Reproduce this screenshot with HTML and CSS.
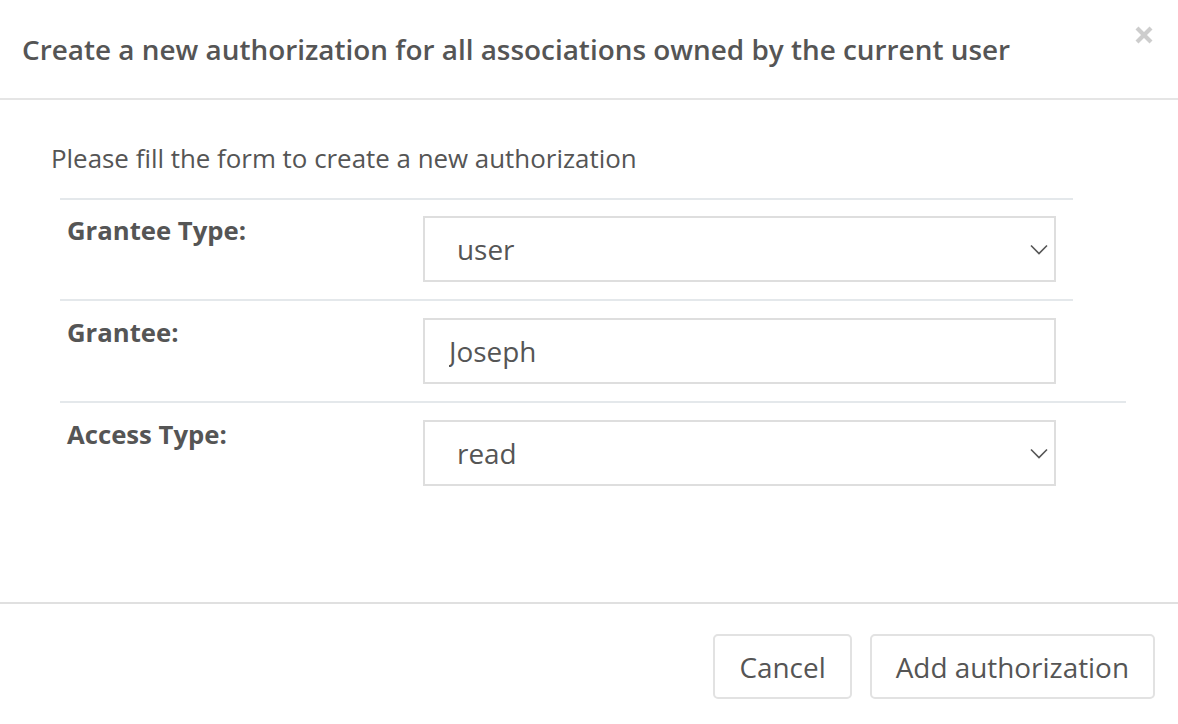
FILE: index.html
```html
<!DOCTYPE html>
<html>
<head>
<meta charset="utf-8">
<link rel="stylesheet" href="styles.css">
</head>
<body>
<div class="modal">
  <div class="modal-header">
    <h4 class="modal-title">Create a new authorization for all associations owned by the current user</h4>
    <button class="close" aria-label="Close">
      <svg width="20" height="20" viewBox="0 0 20 20"><path d="M3 3 L17 17 M17 3 L3 17" stroke="#cdcdcd" stroke-width="4.2" stroke-linecap="butt"/></svg>
    </button>
  </div>
  <div class="modal-body">
    <p class="intro">Please fill the form to create a new authorization</p>
    <div class="form-table">
      <div class="row">
        <div class="label">Grantee Type:</div>
        <div class="field">
          <select class="control select"><option>user</option></select>
          <svg class="chevron" width="18" height="12" viewBox="0 0 18 12"><path d="M1 1.5 L9 9.5 L17 1.5" fill="none" stroke="#555" stroke-width="1.6"/></svg>
        </div>
      </div>
      <div class="row">
        <div class="label">Grantee:</div>
        <div class="field">
          <input class="control input" type="text" value="Joseph">
        </div>
      </div>
      <div class="row wide">
        <div class="label">Access Type:</div>
        <div class="field">
          <select class="control select"><option>read</option></select>
          <svg class="chevron" width="18" height="12" viewBox="0 0 18 12"><path d="M1 1.5 L9 9.5 L17 1.5" fill="none" stroke="#555" stroke-width="1.6"/></svg>
        </div>
      </div>
    </div>
  </div>
  <div class="modal-footer">
    <button class="btn">Cancel</button>
    <button class="btn">Add authorization</button>
  </div>
</div>
</body>
</html>
```

FILE: styles.css
```css
* { box-sizing: border-box; }
html, body { margin: 0; padding: 0; background: #fff; }
body {
  font-family: "Open Sans", "Noto Sans", sans-serif;
  color: #555;
  width: 1178px;
  height: 724px;
  overflow: hidden;
}
.modal { width: 1178px; }
.modal-header {
  position: relative;
  padding: 31px 22px;
  border-bottom: 2px solid #e5e5e5;
}
.modal-title {
  margin: 0;
  font-size: 27.9px;
  font-weight: 600;
  line-height: 36px;
  color: #555;
  white-space: nowrap;
}
.close {
  position: absolute;
  top: 25px;
  right: 24px;
  padding: 0;
  margin: 0;
  border: 0;
  background: transparent;
  width: 20px;
  height: 20px;
}
.close svg { display: block; }
.modal-body {
  padding: 43px 0 99px 51px;
}
.intro {
  margin: 0 0 25px 0;
  font-size: 25.9px;
  line-height: 30px;
}
.form-table { margin-left: 9px; }
.row {
  display: flex;
  width: 1013px;
  border-top: 2px solid #e4e8eb;
  padding: 17px 0 17px 0;
}
.row:first-child { padding-top: 16px; }
.row.wide { width: 1066px; }
.label {
  width: 363px;
  padding-left: 7px;
  font-size: 25.7px;
  font-weight: 700;
  line-height: 30px;
}
.field {
  position: relative;
  width: 633px;
  height: 66px;
}
.control {
  display: block;
  width: 633px;
  height: 66px;
  margin: 0;
  border: 2px solid #dedede;
  border-radius: 0;
  background: #fff;
  font-family: "Open Sans", "Noto Sans", sans-serif;
  font-size: 27.9px;
  color: #555;
  outline: none;
}
.select {
  -webkit-appearance: none;
  appearance: none;
  padding: 0 0 0 32px;
}
.input { padding: 0 0 0 24px; }
.chevron {
  position: absolute;
  right: 8px;
  top: 28px;
  pointer-events: none;
}
.modal-footer {
  border-top: 2px solid #e0e0e0;
  padding: 30px 23px 0 0;
  display: flex;
  justify-content: flex-end;
  gap: 18px;
}
.btn {
  height: 65px;
  padding: 0 24px;
  border: 2px solid #e2e2e2;
  border-radius: 5px;
  background: #fff;
  font-family: "Open Sans", "Noto Sans", sans-serif;
  font-size: 27.9px;
  color: #555;
}
```
